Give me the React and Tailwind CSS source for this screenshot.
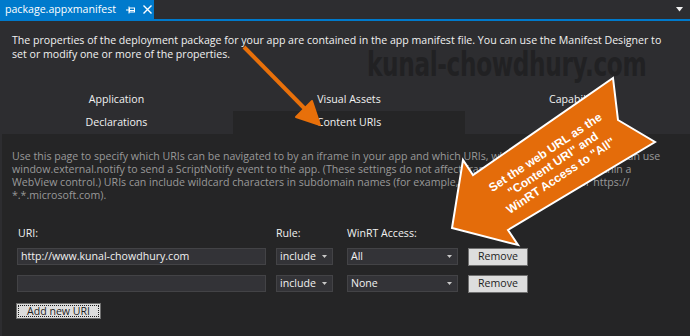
export default function App() {
  return (
    <div className="relative w-[690px] h-[336px] overflow-hidden bg-[#252526] text-[#f1f1f1] font-['Open_Sans',sans-serif] text-[10.6px]">
      {/* document tab strip */}
      <div className="flex h-[19px] bg-[#2d2d30]">
        <div className="flex w-[154px] items-center bg-[#007acc] pl-[5px] text-[10.6px] text-white">
          <span className="whitespace-nowrap leading-none">package.appxmanifest</span>
          <svg className="ml-[10px]" width="9" height="8" viewBox="0 0 9 8">
            <path d="M0 4H3" stroke="#fff" strokeWidth="1" />
            <path d="M3 0.5V7.5" stroke="#fff" strokeWidth="1" />
            <rect x="3.5" y="2" width="5" height="4" fill="none" stroke="#fff" strokeWidth="1" />
            <path d="M4 4.5H8" stroke="#fff" strokeWidth="1" />
          </svg>
          <svg className="ml-[8px]" width="9" height="9" viewBox="0 0 9 9">
            <path d="M0.5 0.5L8.5 8.5M8.5 0.5L0.5 8.5" stroke="#fff" strokeWidth="1.4" />
          </svg>
        </div>
        <div className="flex-1" />
        <div className="flex w-[14px] items-center">
          <svg width="7" height="5" viewBox="0 0 7 5">
            <path d="M0 0H7L3.5 4.5Z" fill="#f1f1f1" />
          </svg>
        </div>
      </div>
      <div className="h-[2px] bg-[#007acc]" />

      {/* header */}
      <div className="h-[67px] bg-[#2d2d30] px-[12px] pt-[12px] leading-[14px] text-[#f1f1f1]">
        <p className="whitespace-nowrap">
          The properties of the deployment package for your app are contained in the app manifest file. You can use the Manifest Designer to
          <br />
          set or modify one or more of the properties.
        </p>
      </div>

      {/* designer tabs */}
      <div className="grid grid-cols-[233px_232px_225px] bg-[#2d2d30] text-[#f1f1f1]">
        <div className="flex h-[23px] items-center justify-center">Application</div>
        <div className="flex h-[23px] items-center justify-center">Visual Assets</div>
        <div className="flex h-[23px] items-center justify-center">Capabilities</div>
        <div className="flex h-[23px] items-center justify-center">Declarations</div>
        <div className="flex h-[23px] items-center justify-center bg-[#252526]">Content URIs</div>
        <div className="h-[23px]" />
      </div>

      {/* content */}
      <div className="h-[202px] border-l-2 border-[#2d2d30] pl-[10px] pt-[16px]">
        <p className="whitespace-nowrap leading-[13px] text-[#999999]">
          Use this page to specify which URIs can be navigated to by an iframe in your app and which URIs, when loaded in an iframe, can use
          <br />
          window.external.notify to send a ScriptNotify event to the app. (These settings do not affect frames or iframes hosted within a
          <br />
          WebView control.) URIs can include wildcard characters in subdomain names (for example, https://*.microsoft.com or https://
          <br />
          *.*.microsoft.com).
        </p>

        <div className="mt-[24px] flex h-[14px] items-center leading-[14px] text-[#f1f1f1]">
          <span className="ml-[6px] w-[258px]">URI:</span>
          <span className="w-[71px]">Rule:</span>
          <span>WinRT Access:</span>
        </div>

        <div className="ml-[5px] mt-[8px] flex flex-col gap-[10px]">
          {[
            { uri: "http://www.kunal-chowdhury.com", access: "All" },
            { uri: "", access: "None" },
          ].map((row, i) => (
            <div key={i} className="flex h-[17px] items-center">
              <div className="flex h-[17px] w-[249px] items-center border border-[#434346] bg-[#333337] pl-[3px] text-[#f1f1f1]">
                {row.uri}
              </div>
              <div className="ml-[10px] flex h-[17px] w-[57px] items-center justify-between border border-[#434346] bg-[#333337] pl-[3px] pr-[5px] text-[#f1f1f1]">
                <span>include</span>
                <svg width="5" height="3" viewBox="0 0 5 3">
                  <path d="M0 0H5L2.5 3Z" fill="#c8c8c8" />
                </svg>
              </div>
              <div className="ml-[14px] flex h-[17px] w-[111px] items-center justify-between border border-[#434346] bg-[#333337] pl-[3px] pr-[5px] text-[#f1f1f1]">
                <span>{row.access}</span>
                <svg width="5" height="3" viewBox="0 0 5 3">
                  <path d="M0 0H5L2.5 3Z" fill="#c8c8c8" />
                </svg>
              </div>
              <div className="ml-[10px] flex h-[18px] w-[60px] items-center justify-center border border-[#707070] bg-[#dddddd] text-[#1e1e1e]">
                Remove
              </div>
            </div>
          ))}
        </div>

        <div className="ml-[4px] mt-[11px] flex h-[16px] w-[85px] items-center justify-center border border-[#707070] bg-[#dddddd] text-[#1e1e1e]">
          <span className="flex h-[12px] w-[81px] items-center justify-center border border-dotted border-[#1e1e1e] leading-none">Add new URI</span>
        </div>
      </div>

      {/* watermark */}
      <div className="pointer-events-none absolute left-[367px] top-[44px] origin-left scale-x-[0.76] whitespace-nowrap text-[34px] font-bold leading-[40px] tracking-[-0.5px] text-[#212123] font-['Liberation_Sans_Narrow','DejaVu_Sans_Condensed',sans-serif]">
        kunal-chowdhury.com
      </div>

      {/* annotation arrows */}
      <svg className="pointer-events-none absolute left-0 top-0" width="690" height="336" viewBox="0 0 690 336">
        <path d="M244 47L309 113" stroke="#e8700a" strokeWidth="4" />
        <path d="M320 125L296 117L312 101Z" fill="#e8700a" stroke="#e8700a" strokeWidth="2" strokeLinejoin="round" />

        <polygon
          points="613,78 618,120 655,142 508,230 518,245 452,228 463,160 473,175"
          fill="#e46c0a"
          stroke="#ffffff"
          strokeWidth="2"
          strokeLinejoin="miter"
        />
        <g transform="translate(553 164) rotate(-33.5)" fill="#ffffff" fontFamily="Liberation Sans, Arial, sans-serif" fontWeight="bold" fontSize="12" textAnchor="middle">
          <text x="0" y="-10">Set the web URL as the</text>
          <text x="0" y="4">"Content URI" and</text>
          <text x="0" y="18">WinRT Access to "All"</text>
        </g>
      </svg>
    </div>
  );
}
